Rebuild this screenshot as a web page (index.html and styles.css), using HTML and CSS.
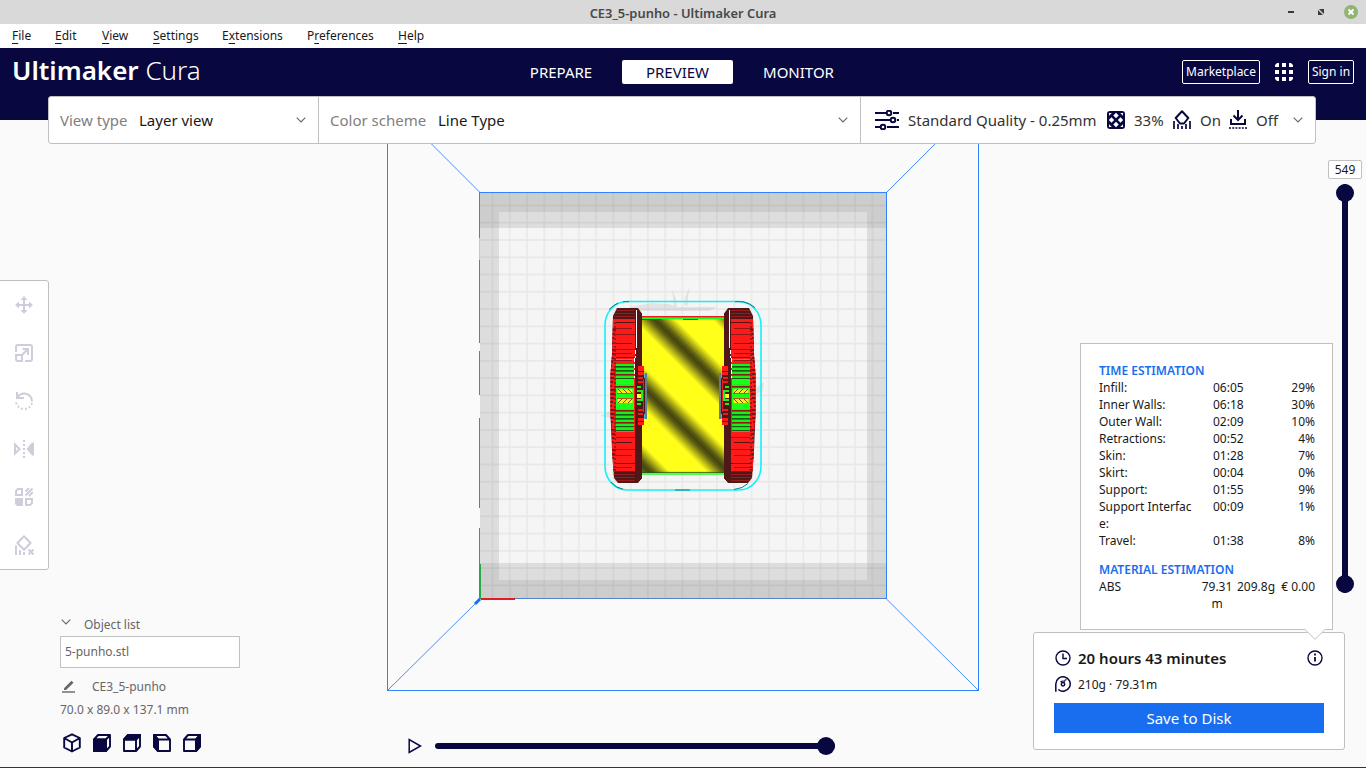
FILE: index.html
```html
<!DOCTYPE html>
<html lang="en">
<head>
<meta charset="utf-8">
<title>CE3_5-punho - Ultimaker Cura</title>
<link rel="stylesheet" href="styles.css">
</head>
<body>
<div class="window">
  <div class="titlebar">
    <span class="title">CE3_5-punho - Ultimaker Cura</span>
    <svg class="wm" width="90" height="24" viewBox="0 0 90 24">
      <path d="M12 12h6" stroke="#3a3a3a" stroke-width="2"/>
      <path d="M43 9h5v5zM42 10v5h5z" fill="#3a3a3a"/>
      <circle cx="75" cy="12" r="7" fill="#92b372"/>
      <path d="M72.500 9.500l5 5m0-5l-5 5" stroke="#fff" stroke-width="2"/>
    </svg>
  </div>
  <nav class="menubar">
    <span class="m1"><u>F</u>ile</span><span class="m2"><u>E</u>dit</span><span class="m3"><u>V</u>iew</span><span class="m4"><u>S</u>ettings</span><span class="m5">E<u>x</u>tensions</span><span class="m6">P<u>r</u>eferences</span><span><u>H</u>elp</span>
  </nav>
  <header class="header">
    <div class="brand"><b>Ultimaker</b> <span>Cura</span></div>
    <div class="tabs"><span class="tab">PREPARE</span><span class="tab active">PREVIEW</span><span class="tab">MONITOR</span></div>
    <div class="account">
      <span class="outline market">Marketplace</span>
      <svg width="18" height="18" viewBox="0 0 18 18" fill="#fff"><path d="M0 4V2l2-2h2v4zM7 0h4v4H7zM14 0h2l2 2v2h-4zM0 7h4v4H0zM7 7h4v4H7zM14 7h4v4h-4zM0 14h4v4H2l-2-2zM7 14h4v4H7zM14 14h4v2l-2 2h-2z"/></svg>
      <span class="outline sign">Sign in</span>
    </div>
  </header>

  <main class="stage">
    <svg class="scene" width="1366" height="647" viewBox="0 120 1366 647">
      <defs>
        <pattern id="grid" x="483.900" y="196.800" width="17.270" height="17.270" patternUnits="userSpaceOnUse"><path d="M8.600 0v18M0 8.600h18" stroke="#000" stroke-opacity=".06" stroke-width="1.300"/></pattern>
        <linearGradient id="skin" gradientUnits="userSpaceOnUse" x1="643" y1="387" x2="603.500" y2="426.500" spreadMethod="repeat">
          <stop offset="0" stop-color="#454510"/><stop offset=".06" stop-color="#5b5b12"/><stop offset=".27" stop-color="#ffff1a"/><stop offset=".73" stop-color="#ffff1a"/><stop offset=".94" stop-color="#5b5b12"/><stop offset="1" stop-color="#454510"/>
        </linearGradient>
        <clipPath id="tire"><path d="M617 308H639V482H617L614 478L612 450L612 434L610.500 415V374L612 355L613 320Z"/></clipPath>
      </defs>
      <g shape-rendering="crispEdges">
        <rect x="480" y="192" width="407" height="407" fill="#cdcdcd"/>
        <path fill="#dddddd" d="M499 212h368v368H499zM480 228h407v335H480z"/>
        <rect x="499" y="228" width="368" height="335" fill="#f5f5f5"/>
      </g>
      <rect x="480" y="192" width="407" height="407" fill="url(#grid)"/>
      <g fill="none" stroke="#3282ff" shape-rendering="crispEdges">
        <path d="M387.500 120V690.500H978.500V120M480 192.500H886.500V599"/>
        <path d="M479.500 192V238M479.500 260V343M479.500 351V395M479.500 418V508M479.500 528V600"/>
        <path d="M479.500 238V260" stroke="#b3c9f5"/>
        <path d="M480 598.500H886" stroke="#5381cb"/>
      </g>
      <path d="M408.500 121L479.500 192M887 192L958 121M886.500 599L978 690M388 690L479.500 599.500" stroke="#3282ff" stroke-width=".9"/>
      <path d="M480 564V599" stroke="#28a745" stroke-width="2"/>
      <path d="M481 599H515" stroke="#e31b23" stroke-width="2"/>
      <path d="M475 604L480 599" stroke="#196ef0" stroke-width="3"/>
      <g fill="#000" fill-opacity=".07">
        <path d="M629 307l22-4 18 1 8 3h40l-8 4h-70zM672 290l4 8 1 9h-3zM690 286l-2 11 0 9-4-1 1-8zM600 416l12-6v8zM755 388l9-6-1 9-8 3z"/>
      </g>
      <rect x="605" y="301.500" width="156" height="188.500" rx="22" ry="24" fill="none" stroke="#12f2f6" stroke-width="1.600"/>
      <path d="M609 309.500q4-4 9-6.500m11-1.300h-6m112 0h8q7 1.500 12 6M611 482q5 6 12 7.200m52 .8h15m44-.5q9-1 14-6" fill="none" stroke="#127b80" stroke-width="1"/>
      <rect x="641" y="319" width="84" height="154" fill="url(#skin)"/>
      <path d="M640 316.800h86" stroke="#f01818" stroke-width="1.800"/>
      <path d="M640 318.500h86M640 474h86" stroke="#1aff1a" stroke-width="1.700"/>
      <path d="M641 472.400h84M683 319.500h15M641 319.500h20" stroke="#245b12" stroke-width=".9"/>
      <g id="wheel">
        <path d="M617 308H638L641.500 313V478L638 483H618L614 478L612 450L610.500 415V374L612 355L613 316Z" fill="#4f1717"/>
        <g id="stripes" clip-path="url(#tire)" shape-rendering="crispEdges"></g>
        <g shape-rendering="crispEdges">
          <path d="M635 310l3-1 4 5v164l-3 4h-4z" fill="#4f1717"/>
          <path d="M636.500 310v38" stroke="#fff"/>
          <path d="M635.500 350v8M634.500 358v20" stroke="#fff" stroke-dasharray="4 2"/>
          <path d="M638 367h6v11h1v36h-1v11h-6z" fill="#4f1717"/>
          <path d="M638 366h6v5h-6zM638 372h6v3h-6zM638 418h6v3h-6zM638 422h6v3h-6z" fill="#ff1a1a"/>
          <path d="M638 378h5M638 382h5M638 410h5M638 414h5M643.500 379v33" stroke="#f01a1a" stroke-width="1.500"/>
          <path d="M637 387h4M637 391h5v9h-5M637 404h4" stroke="#1aef1a" stroke-width="1.500" fill="none"/>
          <path d="M637 394h4v4h-4z" fill="#ffff1a"/>
          <path d="M645 373h2v46h-2z" fill="#5d7f90"/>
          <path d="M644 373h1v5h-1zM644 414h1v5h-1z" fill="#53b8c8"/>
        </g>
        <path d="M616 388h18v16h-18z" fill="#1aff1a"/>
        <path d="M617.500 389h15v4h-15zM617.500 399h15v4h-15z" fill="#f4ed24"/>
        <path d="M618 389l4 4m1-4l4 4m1-4l4 4M618 403l4-4m1 4l4-4m1 4l4-4" stroke="#705011"/>
        <path d="M617 393.500h16M617 398.500h16" stroke="#d73818" stroke-width=".8"/>
      </g>
      <use href="#wheel" transform="matrix(-1 0 0 1 1366 0)"/>
    </svg>

    <section class="configbar">
      <div class="cell view"><span class="muted">View type</span><span class="val">Layer view</span><svg class="chev" width="10" height="6" viewBox="0 0 10 6"><path d="M.7.7L5 5 9.300.7"/></svg></div>
      <div class="cell scheme"><span class="muted">Color scheme</span><span class="val">Line Type</span><svg class="chev" width="10" height="6" viewBox="0 0 10 6"><path d="M.7.7L5 5 9.300.7"/></svg></div>
      <div class="cell profile">
        <svg width="24" height="20" viewBox="0 0 24 20" fill="none" stroke="#08073f" stroke-width="2"><path d="M0 3h11M18 3h6M0 10h15M22 10h2M0 17h5M12 17h12"/><circle cx="14" cy="3" r="2.300"/><circle cx="18" cy="10" r="2.300"/><circle cx="8" cy="17" r="2.300"/></svg>
        <span class="quality">Standard Quality - 0.25mm</span>
        <svg width="18" height="18" viewBox="0 0 18 18"><rect width="18" height="18" rx="3" fill="#08073f"/><path d="M9 1.800l2.700 2.700L9 7.200 6.300 4.500zM9 10.800l2.700 2.700L9 16.200l-2.700-2.700zM4.500 6.300L7.200 9l-2.700 2.700L1.800 9zM13.500 6.300L16.200 9l-2.700 2.700L10.800 9zM2 2h2.800L2 4.800zM16 2v2.800L13.200 2zM2 16v-2.800L4.800 16zM16 16h-2.800l2.800-2.800z" fill="#fff"/></svg>
        <span class="pct">33%</span>
        <svg width="18" height="20" viewBox="0 0 18 20" fill="none" stroke="#08073f"><path d="M9 1.200L15.300 8 11 13.500H7L2.700 8z" stroke-width="2" stroke-linejoin="round"/><path d="M1 11v8M17 11v8M5 14v5M13 14v5M9 16v3" stroke-width="1.700"/></svg>
        <span class="on">On</span>
        <svg width="18" height="20" viewBox="0 0 18 20" fill="none" stroke="#08073f" stroke-width="2"><path d="M9 0v9M4.500 5.500L9 10l4.500-4.500M2 9v5h14V9"/><path d="M0 18h18" stroke-width="1.700" stroke-dasharray="2 1.200"/></svg>
        <span class="off">Off</span>
        <svg class="chev" width="10" height="6" viewBox="0 0 10 6"><path d="M.7.7L5 5 9.300.7"/></svg>
      </div>
    </section>

    <aside class="tools">
      <svg width="18" height="18" viewBox="0 0 18 18" fill="none" stroke="#cfcddc" stroke-width="2"><path d="M9 2v14M2 9h14"/><path d="M9 0l3.500 4h-7zM9 18l3.500-4h-7zM0 9l4-3.500v7zM18 9l-4-3.500v7z" fill="#cfcddc" stroke="none"/></svg>
      <svg width="18" height="18" viewBox="0 0 18 18" fill="none" stroke="#cfcddc" stroke-width="2"><path d="M1 8V3q0-2 2-2h12q2 0 2 2v12q0 2-2 2h-5M1 11h6v6H3q-2 0-2-2zM7 11l6-6M7.500 5H13v6"/></svg>
      <svg width="18" height="18" viewBox="0 0 18 18" fill="none" stroke="#cfcddc" stroke-width="2"><path d="M2 0v6h7M2 6Q5 1 10 1.500q6.500 1 7 8"/><path d="M1 10.500q2 6.500 8 6.500t8-6" stroke-dasharray="1.800 2.200"/></svg>
      <svg width="20" height="18" viewBox="0 0 20 18" fill="none" stroke="#cfcddc" stroke-width="2"><path d="M1 4.500L5.500 9 1 13.500z"/><path d="M20 2.500v13h-2L12.500 9 18 2.500z" fill="#cfcddc" stroke="none"/><path d="M10 0v18" stroke-dasharray="2 2"/></svg>
      <svg width="18" height="18" viewBox="0 0 18 18" fill="none" stroke="#cfcddc" stroke-width="2"><path d="M3 1h4v6H1V3zM11 11h6v4l-2 2h-4z"/><path d="M0 10h8v8H2l-2-2z" fill="#cfcddc" stroke="none"/><path d="M10.500 3.500L14 0M10.500 7.500l7-7M14 8l4-4"/></svg>
      <svg width="20" height="20" viewBox="0 0 20 20" fill="none" stroke="#cfcddc" stroke-width="2"><path d="M10 1.200L16.600 8 10 14.700 3.400 8z" stroke-linejoin="round"/><path d="M2 10.500V20M6 15v5M10 17v3M14.500 14.500l5 5m0-5l-5 5"/></svg>
    </aside>

    <section class="objects">
      <div class="objhead"><svg class="chev" width="10" height="6" viewBox="0 0 10 6"><path d="M.7.7L5 5 9.300.7"/></svg><span>Object list</span></div>
      <div class="objitem">5-punho.stl</div>
      <div class="jobname"><svg width="13" height="13" viewBox="0 0 13 13"><path d="M2 8.200L9.500.8l2 2L4 10H2z" fill="#666"/><path d="M0 12h13" stroke="#666" stroke-width="1.400"/></svg><span>CE3_5-punho</span></div>
      <div class="dims">70.0 x 89.0 x 137.1 mm</div>
      <div class="cubes">
        <svg viewBox="0 0 20 20"><path d="M10 1.300L17.800 5v9.500L10 18.500 2.200 14.500V5zM2.200 5L10 9.500 17.800 5M10 9.500v9"/></svg>
        <svg viewBox="0 0 20 20"><path d="M2 6.500L6 2h12v11.500L14 18H2zM14 6.500L18 2M14 6.500V18M2 6.500h12"/><path class="f" d="M2 6.500h12V18H2z"/></svg>
        <svg viewBox="0 0 20 20"><path d="M2 6.500L6 2h12v11.500L14 18H2zM14 6.500L18 2M14 6.500V18M2 6.500h12"/><path class="f" d="M2 6.500L6 2h12l-4 4.500z"/></svg>
        <svg viewBox="0 0 20 20"><path d="M18 6.500L14 2H2v11.500L6 18h12zM6 6.500L2 2M6 6.500V18M18 6.500H6"/><path class="f" d="M2 2l4 4.500V18l-4-4.500z"/></svg>
        <svg viewBox="0 0 20 20"><path d="M2 6.500L6 2h12v11.500L14 18H2zM14 6.500L18 2M14 6.500V18M2 6.500h12"/><path class="f" d="M18 2l-4 4.500V18l4-4.500z"/></svg>
      </div>
    </section>

    <div class="player">
      <svg width="14" height="16" viewBox="0 0 14 16"><path d="M1.200 1.500v13L12.500 8z" fill="none" stroke="#08073f" stroke-width="1.500"/></svg>
      <div class="track"><i></i></div>
    </div>

    <div class="layers"><span class="layerno">549</span><div class="vtrack"><i></i><i></i></div></div>

    <section class="output">
      <div class="line time"><svg width="16" height="16" viewBox="0 0 16 16" fill="none" stroke="#08073f" stroke-width="1.400"><circle cx="8" cy="8" r="7"/><path d="M8 3.500v5h4"/></svg><b>20 hours 43 minutes</b><svg class="info" width="16" height="16" viewBox="0 0 16 16" fill="none" stroke="#08073f" stroke-width="1.400"><circle cx="8" cy="8" r="7"/><path d="M8 3.500v2M8 7v4.500" stroke-width="1.800"/></svg></div>
      <div class="line mat"><svg width="16" height="16" viewBox="0 0 16 16" fill="none" stroke="#08073f" stroke-width="1.500"><path d="M.8 15.800V8a7.200 7.200 0 1 1 2.600 5.500Q5.500 15.300 8 15.200"/><circle cx="8" cy="8.300" r="1.700"/><path d="M5.500 6Q7.500 4.300 10 5.500M9.500 4.500l2-1" stroke-width="1.200"/></svg><span>210g · 79.31m</span></div>
      <div class="save">Save to Disk</div>
    </section>

    <section class="details">
      <h3>TIME ESTIMATION</h3>
      <div class="row"><span>Infill:</span><span>06:05</span><span>29%</span></div>
      <div class="row"><span>Inner Walls:</span><span>06:18</span><span>30%</span></div>
      <div class="row"><span>Outer Wall:</span><span>02:09</span><span>10%</span></div>
      <div class="row"><span>Retractions:</span><span>00:52</span><span>4%</span></div>
      <div class="row"><span>Skin:</span><span>01:28</span><span>7%</span></div>
      <div class="row"><span>Skirt:</span><span>00:04</span><span>0%</span></div>
      <div class="row"><span>Support:</span><span>01:55</span><span>9%</span></div>
      <div class="row"><span>Support Interfac<br>e:</span><span>00:09</span><span>1%</span></div>
      <div class="row"><span>Travel:</span><span>01:38</span><span>8%</span></div>
      <h3 class="second">MATERIAL ESTIMATION</h3>
      <div class="mrow"><span>ABS</span><span>79.31<br>m</span><span>209.8g</span><span>€ 0.00</span></div>
      <svg class="tip" width="22" height="12" viewBox="0 0 22 12"><path d="M0 0h22v1L11 11.500 0 1z" fill="#fff"/><path d="M.5 1L11 11.300 21.500 1" fill="none" stroke="#c0c0c0"/></svg>
    </section>
  </main>
  <div class="edge"></div>
</div>
<script src="wheel.js"></script>
</body>
</html>
```
FILE: styles.css
```css
* { box-sizing: border-box; }
body { margin: 0; font-family: "Noto Sans", sans-serif; font-size: 12px; color: #191919; }
svg { display: block; flex: none; }
.window { width: 1366px; height: 768px; display: flex; flex-direction: column; overflow: hidden; background: #fafafa; }
.titlebar { height: 24px; background: #d9d9d9; position: relative; display: flex; justify-content: center; align-items: center; padding-top: 2px; }
.title { font-weight: 600; font-size: 12.9px; color: #484848; white-space: nowrap; }
.wm { position: absolute; right: 0; top: 0; }
.menubar { height: 24px; background: #fff; display: flex; align-items: center; padding-left: 12px; line-height: 22px; white-space: nowrap; }
.menubar u { text-underline-offset: 3px; }
.m1 { width: 43px; }
.m2 { width: 47px; }
.m3 { width: 51px; }
.m4 { width: 69px; }
.m5 { width: 85px; }
.m6 { width: 91px; }
.header { height: 72px; background: #08073f; display: flex; align-items: flex-start; color: #fff; }
.brand { width: 509px; padding-left: 12px; font-size: 26px; line-height: 44px; white-space: nowrap; }
.brand b { font-weight: 600; }
.brand span { font-weight: 300; }
.tabs { display: flex; padding-top: 12px; }
.tab { height: 24px; line-height: 25px; font-size: 15px; text-align: center; width: 113px; }
.tab:first-child { width: 104px; margin-right: 9px; }
.tab.active { background: #fff; color: #08073f; border-radius: 2px; width: 111px; margin-right: 9px; }
.account { margin-left: auto; padding: 12px 12px 0 0; display: flex; align-items: center; }
.outline { border: 1px solid #fff; border-radius: 2px; height: 24px; line-height: 22px; text-align: center; }
.market { width: 78px; margin-right: 15px; }
.sign { width: 46px; margin-left: 15px; }
.stage { position: relative; height: 647px; }
.scene { position: absolute; left: 0; top: 0; }
.edge { height: 1px; background: #333; }
.chev { fill: none; stroke: #666; stroke-width: 1.1; }
.configbar { position: absolute; left: 48px; top: -24px; width: 1268px; height: 48px; border: 1px solid #c0c0c0; border-radius: 3px; background: #fff; display: flex; font-size: 15px; white-space: nowrap; }
.cell { display: flex; align-items: center; padding-left: 11px; flex: none; }
.cell + .cell { border-left: 1px solid #c0c0c0; }
.muted { color: #808080; }
.view { width: 269px; }
.view .muted { width: 79px; }
.scheme { width: 542px; }
.scheme .muted { width: 108px; }
.view .chev, .scheme .chev { margin-left: auto; margin-right: 12px; }
.cell.profile { flex: 1; padding-left: 14px; color: #333; }
.quality { width: 208px; padding-left: 9px; }
.pct { width: 48px; padding-left: 9px; }
.on { width: 38px; padding-left: 9px; }
.off { width: 46px; padding-left: 9px; }
.tools { position: absolute; left: -1px; top: 160px; width: 50px; height: 290px; border: 1px solid #c0c0c0; border-radius: 0 3px 3px 0; background: #fff; display: grid; grid-template-rows: repeat(6, 48px); place-items: center; }
.objects { position: absolute; left: 60px; top: 495px; color: #666; }
.objhead { display: flex; gap: 13px; height: 21px; line-height: 20px; }
.objhead .chev { margin: 4px 0 0 1px; }
.objitem { width: 180px; height: 32px; border: 1px solid #c0c0c0; background: #fff; padding-left: 4px; line-height: 29px; }
.jobname { display: flex; align-items: center; gap: 17px; margin: 10px 0 0 2px; height: 17px; }
.dims { margin-top: 6px; line-height: 17px; }
.cubes { display: flex; gap: 10px; margin: 15px 0 0 2px; }
.cubes svg { width: 20px; height: 20px; fill: none; stroke: #08073f; stroke-width: 1.9; stroke-linejoin: round; }
.cubes .f { fill: #08073f; }
.player { position: absolute; left: 408px; top: 617px; display: flex; align-items: center; height: 18px; gap: 13px; }
.track { width: 400px; height: 6px; border-radius: 3px; background: #08073f; position: relative; }
.track i, .vtrack i { position: absolute; width: 18px; height: 18px; border-radius: 50%; background: #08073f; }
.track i { right: 0; top: -6px; }
.layers { position: absolute; left: 1328px; top: 40px; width: 34px; display: flex; flex-direction: column; align-items: center; gap: 5px; }
.layerno { width: 34px; height: 19px; line-height: 17px; border: 1px solid #c0c0c0; border-radius: 2px; background: #fff; text-align: center; }
.vtrack { width: 6px; height: 409px; background: #08073f; border-radius: 3px; position: relative; }
.vtrack i { left: -6px; top: 0; }
.vtrack i:last-child { top: auto; bottom: 0; }
.output { position: absolute; left: 1033px; top: 512px; width: 312px; height: 118px; border: 1px solid #c0c0c0; border-radius: 3px; background: #fff; padding: 14px 20px; }
.line { display: flex; align-items: center; gap: 7px; padding-left: 1px; }
.time { height: 21px; font-size: 15px; }
.time b { font-weight: 600; }
.info { margin-left: auto; margin-right: 1px; }
.mat { height: 20px; margin-top: 6px; }
.save { margin-top: 9px; height: 30px; line-height: 31px; background: #196ef0; color: #fff; font-size: 15px; text-align: center; }
.details { position: absolute; left: 1080px; top: 223px; width: 253px; height: 287px; border: 1px solid #c0c0c0; background: #fff; padding: 18px 17px 0 18px; line-height: 17px; }
.details h3 { margin: 0; font-size: 12px; font-weight: 600; color: #196ef0; line-height: 17px; }
.details .second { margin-top: 12px; }
.row { display: grid; grid-template-columns: 114px 40px 1fr; white-space: nowrap; }
.row span:last-child { text-align: right; }
.mrow { display: grid; grid-template-columns: 101px 34px 1fr 40px; white-space: nowrap; }
.mrow span:nth-child(2) { text-align: center; }
.mrow span:nth-child(3) { padding-left: 3px; }
.mrow span:last-child { text-align: right; }
.tip { position: absolute; right: 6px; top: 284px; }
```
FILE: wheel.js
```js
// Sliced tire layers: alternating wall, shell and shadow rows.
(function () {
  var ns = "http://www.w3.org/2000/svg";
  var host = document.getElementById("stripes");
  function bar(x, y, w, h, color) {
    var r = document.createElementNS(ns, "rect");
    r.setAttribute("x", x);
    r.setAttribute("y", y);
    r.setAttribute("width", w);
    r.setAttribute("height", h);
    r.setAttribute("fill", color);
    host.appendChild(r);
  }
  bar(610, 319, 26, 153, "#ff1a1a");
  [310, 313, 316, 474, 477, 480].forEach(function (y) { bar(612, y, 25, 1, "#941c1c"); });
  [322, 328, 334, 343, 349, 353, 357, 360, 437, 442, 449, 455, 463, 467, 471].forEach(function (y, i) {
    bar(i % 2 ? 611 : 616, y, 21, 1, i % 3 ? "#8e1717" : "#541515");
  });
  for (var y = 321; y < 471; y += 4) {
    bar(610, y, 2 + (y % 5), 2, "#6c1717");
    bar(614, y + 1, 2, 2, "#a31919");
  }
  for (y = 364; y < 430; y += 4) {
    bar(616, y, 18, 2, "#1aef1a");
    bar(616, y + 2, 18, 1, y % 3 ? "#185b12" : "#8e1717");
  }
  [359, 427, 431].forEach(function (v) { bar(616, v, 18, 1, "#1ad51a"); });
  bar(616, 379, 18, 5, "#1aff1a");
  bar(616, 404, 18, 5, "#1aff1a");
})();
```
